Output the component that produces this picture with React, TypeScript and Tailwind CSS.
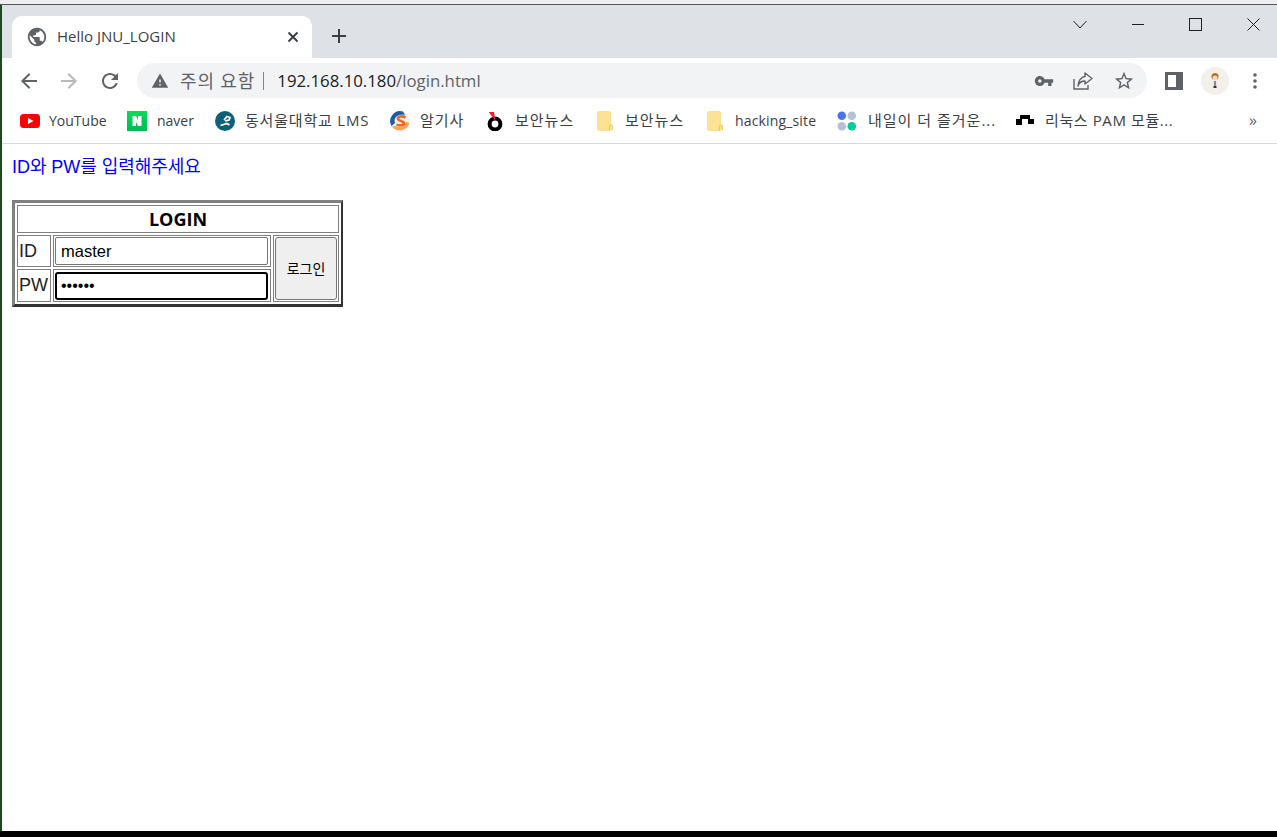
import React from "react";

const ui = "font-['Open_Sans','Noto_Sans_CJK_KR',sans-serif]";
const kr = "font-['Liberation_Sans','Noto_Sans_CJK_KR',sans-serif]";

function Mat({ d, size, color, className = "" }: { d: string; size: number; color: string; className?: string }) {
  return (
    <svg width={size} height={size} viewBox="0 0 24 24" fill={color} className={className}>
      <path d={d} />
    </svg>
  );
}

const Youtube = () => (
  <svg width="20" height="20" viewBox="0 0 20 20">
    <rect x="0" y="3" width="20" height="14" rx="3.5" fill="#f00" />
    <polygon points="8,7 13.5,10 8,13" fill="#fff" />
  </svg>
);
const Naver = () => (
  <svg width="20" height="20" viewBox="0 0 20 20">
    <defs>
      <linearGradient id="nv" x1="0" y1="0" x2="0" y2="1">
        <stop offset="0" stopColor="#00de5a" />
        <stop offset="1" stopColor="#00b956" />
      </linearGradient>
    </defs>
    <rect width="20" height="20" fill="url(#nv)" />
    <polygon points="5.5,5 9,5 11,9 11,5 14.5,5 14.5,15 11,15 9,11 9,15 5.5,15" fill="#fff" />
  </svg>
);
const Lms = () => (
  <svg width="20" height="20" viewBox="0 0 20 20">
    <circle cx="10" cy="10" r="10" fill="#0d6077" />
    <path d="M9 9 L12 5.5 L15 6.5 L14 9 L10 10 M5.5 14.5 L12 12.5 L14.5 14" stroke="#fff" strokeWidth="1.8" fill="none" />
  </svg>
);
const Algisa = () => (
  <svg width="20" height="20" viewBox="0 0 20 20">
    <circle cx="10" cy="10" r="10" fill="#f6f0ea" />
    <path d="M13 0.5 A10 10 0 0 0 1.5 15 L5 12 A6 6 0 0 1 9 4 Q12 3 15 4 Z" fill="#1a5aa6" />
    <path d="M2 15.5 A10 10 0 0 0 19.5 12 L16 11 A6.5 6.5 0 0 1 6 15 Z" fill="#f8a45c" />
    <path d="M15.5 6.5 C12 4.5 7.5 5.5 8 8 C8.5 10.5 14 9.5 14 12.5 C14 14.5 9 15 6.5 13.5" stroke="#f0661a" strokeWidth="2.6" fill="none" />
  </svg>
);
const Boan = () => (
  <svg width="18" height="20" viewBox="0 0 18 20">
    <circle cx="8" cy="13" r="5.4" fill="none" stroke="#000" strokeWidth="4" />
    <polygon points="1.7,1 7,1 8.5,10" fill="#f01c2c" />
  </svg>
);
const Folder = () => (
  <svg width="16" height="20" viewBox="0 0 16 20">
    <path d="M2 0 H12 Q14 0 14 2 V13 L15 14 V18 Q15 20 13 20 H2 Q0 20 0 18 V2 Q0 0 2 0 Z" fill="#fde293" />
    <path d="M12.5 20 V15.5 Q12.5 14 14 14 Q15.5 14 15.5 15.5 V19" fill="none" stroke="#f2c94c" strokeWidth="1" />
  </svg>
);
const Dots = () => (
  <svg width="21" height="20" viewBox="0 0 21 20">
    <circle cx="5" cy="4.5" r="4.5" fill="#4a74ec" />
    <circle cx="15.5" cy="4.5" r="4.5" fill="#b4c0d8" />
    <circle cx="5" cy="15.5" r="4.5" fill="#b4c0d8" />
    <circle cx="15.5" cy="15.5" r="4.5" fill="#00c9a0" />
  </svg>
);
const Pam = () => (
  <svg width="20" height="20" viewBox="0 0 20 20">
    <path d="M5 4 H15 V8 H19 V13 H13 V8 H7 V14 H1 V8 H5 Z" fill="#000" />
  </svg>
);

const bookmarks: { w: string; icon: React.ReactNode; label: string; text: string }[] = [
  { w: "w-[107px]", icon: <Youtube />, label: "YouTube", text: "ml-[9px] text-[14px]" },
  { w: "w-[88px]", icon: <Naver />, label: "naver", text: "ml-[10px] text-[14px]" },
  { w: "w-[175px]", icon: <Lms />, label: "동서울대학교 LMS", text: "ml-[10px] text-[15px] tracking-[0.8px]" },
  { w: "w-[97px]", icon: <Algisa />, label: "알기사", text: "ml-[10px] text-[15px] tracking-[1px]" },
  { w: "w-[110px]", icon: <Boan />, label: "보안뉴스", text: "ml-[8px] text-[15px] tracking-[1px]" },
  { w: "w-[110px]", icon: <Folder />, label: "보안뉴스", text: "ml-[8px] text-[15px] tracking-[1px]" },
  { w: "w-[130px]", icon: <Folder />, label: "hacking_site", text: "ml-[8px] text-[14px] tracking-[0.15px]" },
  { w: "w-[178px]", icon: <Dots />, label: "내일이 더 즐거운...", text: "ml-[11px] text-[15px] tracking-[1px]" },
  { w: "w-[170px]", icon: <Pam />, label: "리눅스 PAM 모듈...", text: "ml-[10px] text-[15px] tracking-[0.6px]" },
];

export default function App() {
  return (
    <div className={`flex flex-col w-[1277px] h-[837px] overflow-hidden bg-white ${ui}`}>
      <div className="h-[4px] bg-[#eeeeee]" />
      <div className="h-[1px] bg-[#55585a]" />
      <div className="flex flex-col flex-1 border-l-2 border-[#1c4a20] min-h-0">
        {/* tab strip */}
        <div className="h-[53px] bg-[#dee1e6] flex pl-[10px]">
          <div className="mt-[11px] h-[42px] w-[300px] bg-white rounded-t-[10px] flex items-center pl-[14px] pr-[12px]">
            <Mat size={22} color="#5f6368" d="M12 2C6.48 2 2 6.48 2 12s4.48 10 10 10 10-4.48 10-10S17.52 2 12 2zm-1 17.93c-3.95-.49-7-3.85-7-7.93 0-.62.08-1.21.21-1.79L9 15v1c0 1.1.9 2 2 2v1.93zm6.9-2.54c-.26-.81-1-1.39-1.9-1.39h-1v-3c0-.55-.45-1-1-1H8v-2h2c.55 0 1-.45 1-1V7h2c1.1 0 2-.9 2-2v-.41c2.93 1.19 5 4.06 5 7.41 0 2.08-.8 3.97-2.1 5.39z" />
            <span className="ml-[9px] mb-[2px] text-[15px] text-[#3c4043] flex-1 whitespace-nowrap">Hello JNU_LOGIN</span>
            <svg width="12" height="12" viewBox="0 0 12 12" className="mr-[1px]">
              <path d="M1.5 1.5 L10.5 10.5 M10.5 1.5 L1.5 10.5" stroke="#3c4043" strokeWidth="2" />
            </svg>
          </div>
          <div className="ml-[19px] mt-[23px] h-[16px]">
            <svg width="16" height="16" viewBox="0 0 16 16">
              <path d="M8 1 V15 M1 8 H15" stroke="#3c4043" strokeWidth="2" />
            </svg>
          </div>
          <div className="ml-auto flex items-start pt-[13px] pr-[17px]">
            <svg width="14" height="12" viewBox="0 0 14 12" className="mr-[45px] mt-[1px]">
              <path d="M0.5 2 L7 9 L13.5 2" stroke="#202124" strokeWidth="1" fill="none" />
            </svg>
            <svg width="12" height="12" viewBox="0 0 12 12" className="mr-[45px]">
              <path d="M0 6.5 H16" stroke="#202124" strokeWidth="1" />
            </svg>
            <svg width="13" height="13" viewBox="0 0 13 13" className="mr-[45px]">
              <rect x="0.5" y="0.5" width="12" height="12" fill="none" stroke="#202124" strokeWidth="1" />
            </svg>
            <svg width="13" height="13" viewBox="0 0 13 13">
              <path d="M0.5 0.5 L12.5 12.5 M12.5 0.5 L0.5 12.5" stroke="#202124" strokeWidth="1" />
            </svg>
          </div>
        </div>

        {/* toolbar */}
        <div className="h-[45px] flex items-center">
          <Mat size={24} color="#5f6368" className="ml-[15px]" d="M20 11H7.83l5.59-5.59L12 4l-8 8 8 8 1.41-1.41L7.83 13H20v-2z" />
          <Mat size={24} color="#b5b7ba" className="ml-[16px]" d="M4 11h12.17l-5.59-5.59L12 4l8 8-8 8-1.41-1.41L16.17 13H4v-2z" />
          <Mat size={24} color="#5f6368" className="ml-[17px]" d="M17.65 6.35C16.2 4.9 14.21 4 12 4c-4.42 0-7.99 3.58-7.99 8s3.57 8 7.99 8c3.73 0 6.84-2.55 7.73-6h-2.08c-.82 2.33-3.04 4-5.65 4-3.31 0-6-2.69-6-6s2.69-6 6-6c1.66 0 3.14.69 4.22 1.78L13 11h7V4l-2.35 2.35z" />
          <div className="ml-[15px] w-[1010px] h-[35px] rounded-full bg-[#f1f3f4] flex items-center pl-[14px] pr-[12px]">
            <Mat size={18} color="#5f6368" d="M1 21h22L12 2 1 21zm12-3h-2v-2h2v2zm0-4h-2v-4h2v4z" />
            <span className="ml-[11px] text-[18px] tracking-[1px] text-[#5f6368] whitespace-nowrap font-['Noto_Sans_CJK_KR',sans-serif]">주의 요함</span>
            <span className="ml-[8px] w-[1px] h-[18px] bg-[#80868b]" />
            <span className="ml-[13px] text-[16.8px] text-[#202124] whitespace-nowrap">192.168.10.180<span className="text-[#5f6368]">/login.html</span></span>
            <div className="ml-auto flex items-center">
              <Mat size={20} color="#5f6368" className="mr-[19px]" d="M12.65 10C11.83 7.67 9.61 6 7 6c-3.31 0-6 2.69-6 6s2.69 6 6 6c2.61 0 4.83-1.67 5.65-4H17v4h4v-4h2v-4H12.65zM7 14c-1.1 0-2-.9-2-2s.9-2 2-2 2 .9 2 2-.9 2-2 2z" />
              <svg width="20" height="20" viewBox="0 0 20 20" className="mr-[20px]" fill="none" stroke="#5f6368" strokeWidth="1.4">
                <path d="M1 8 V18 H15 V14" />
                <path d="M12 2 L19 7.5 L12 13 V10 C8 10 6 12 5 15 C5 10 8 6 12 5.5 Z" strokeLinejoin="round" />
              </svg>
              <Mat size={22} color="#5f6368" d="M22 9.24l-7.19-.62L12 2 9.19 8.63 2 9.24l5.46 4.73L5.82 21 12 17.27 18.18 21l-1.63-7.03L22 9.24zM12 15.4l-3.76 2.27 1-4.28-3.32-2.88 4.38-.38L12 6.1l1.71 4.04 4.38.38-3.32 2.88 1 4.28L12 15.4z" />
            </div>
          </div>
          <svg width="18" height="18" viewBox="0 0 18 18" className="ml-[18px]">
            <rect x="0" y="0" width="18" height="18" fill="#5f6368" />
            <rect x="3" y="3" width="8" height="12" fill="#fff" />
          </svg>
          <svg width="28" height="28" viewBox="0 0 28 28" className="ml-[18px]">
            <circle cx="14" cy="14" r="14" fill="#f3efea" />
            <circle cx="14" cy="9.5" r="3.5" fill="#b5701f" />
            <circle cx="14" cy="11" r="2.5" fill="#f1d9b8" />
            <rect x="11.5" y="14" width="5" height="5" fill="#e8e8e8" />
            <rect x="13.5" y="14" width="1" height="5" fill="#333" />
            <rect x="12.5" y="19" width="3" height="2" fill="#333" />
          </svg>
          <svg width="4" height="16" viewBox="0 0 4 16" className="ml-[24px]">
            <circle cx="2" cy="2" r="1.8" fill="#5f6368" />
            <circle cx="2" cy="8" r="1.8" fill="#5f6368" />
            <circle cx="2" cy="14" r="1.8" fill="#5f6368" />
          </svg>
        </div>

        {/* bookmarks */}
        <div className="h-[41px] flex items-center border-b border-[#d9dadc] pl-[18px] pb-[4px]">
          {bookmarks.map((b, i) => (
            <div key={i} className={`${b.w} shrink-0 flex items-center`}>
              <span className="w-[20px] h-[20px] flex items-center justify-start shrink-0">{b.icon}</span>
              <span className={`${b.text} mb-[2px] text-[#3c4043] whitespace-nowrap`}>{b.label}</span>
            </div>
          ))}
          <span className="ml-[64px] mb-[2px] text-[16px] text-[#5f6368] leading-none">»</span>
        </div>

        {/* page */}
        <div className={`flex-1 pl-[10px] pt-[13px] ${kr}`}>
          <p className="text-[18px] leading-[20px] text-[#0000ff] tracking-[-0.05px]">ID와 PW를 입력해주세요</p>
          <table className="mt-[23px] border-separate border-spacing-[2px] border-[3px] border-r-[2px] border-t-[#808080] border-l-[#808080] border-r-[#333333] border-b-[#333333]">
            <tbody>
              <tr>
                <th colSpan={3} className="h-[28px] border border-[#808080] text-[18px] leading-none p-0 font-bold text-black font-['Open_Sans',sans-serif]">LOGIN</th>
              </tr>
              <tr>
                <td className="w-[34px] h-[32px] border border-[#808080] text-[18px] pl-[1px] p-0 text-[#222]">ID</td>
                <td className="border border-[#808080] p-[1px] pr-[2px]">
                  <input readOnly value="master" className="block w-[213px] h-[28px] border border-[#767676] rounded-[2px] px-[5px] text-[16.5px] text-black outline-none font-['Liberation_Sans',sans-serif]" />
                </td>
                <td rowSpan={2} className="border border-[#808080] p-[1px]">
                  <button className="block w-[62px] h-[63px] bg-[#efefef] border border-[#767676] rounded-[3px] text-[14px] text-black p-0 font-['Noto_Sans_CJK_KR',sans-serif]">로그인</button>
                </td>
              </tr>
              <tr>
                <td className="h-[33px] border border-[#808080] text-[18px] pl-[1px] p-0 text-[#222]">PW</td>
                <td className="border border-[#808080] p-[1px] pr-[2px]">
                  <input readOnly type="password" value="123456" className="block w-[213px] h-[28px] border-2 border-black rounded-[3px] px-[4px] text-[16px] text-black outline-none font-['Liberation_Sans',sans-serif]" />
                </td>
              </tr>
            </tbody>
          </table>
        </div>
      </div>
      <div className="h-[6px] bg-black" />
    </div>
  );
}
